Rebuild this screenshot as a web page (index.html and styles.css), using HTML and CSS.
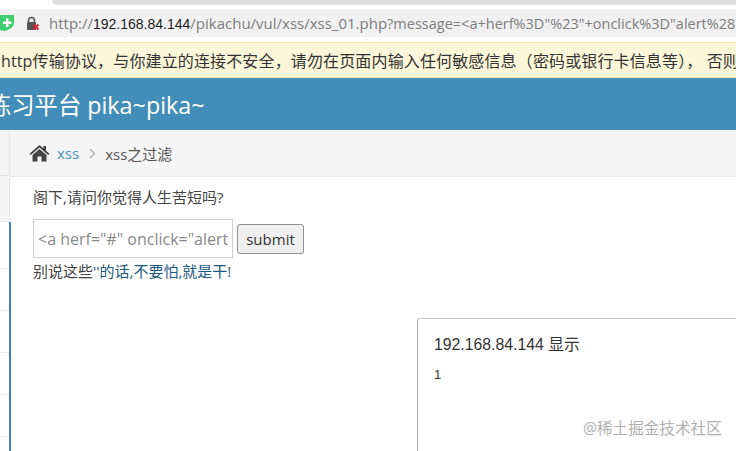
FILE: index.html
```html
<!DOCTYPE html>
<html lang="en">
<head>
  <meta charset="UTF-8" />
  <title>xss之过滤</title>
  <link rel="stylesheet" href="styles.css">
</head>
<body>
  <div class="tab-strip"><div class="tab"></div></div>
  <div class="address-bar">
    <svg class="shield" width="14" height="18" viewBox="0 0 14 18">
      <path d="M-6 1h20v8c0 4-5 7-10 8-6-1-10-4-10-8z" fill="#3fcf6f"/>
      <path d="M3 7.500h3v-3h2.500v3h3V10h-3v3H6v-3H3z" fill="#fff"/>
    </svg>
    <svg class="lock" width="14" height="15" viewBox="0 0 14 15">
      <path d="M2.500 6V4.500a3 3 0 0 1 6 0V6" fill="none" stroke="#555" stroke-width="1.600"/>
      <rect x="1" y="6" width="9" height="8" rx="1" fill="#555"/>
      <path d="M7.500 8.500l5 5m0-5l-5 5" stroke="#d9232e" stroke-width="2"/>
    </svg>
    <div class="url"><span class="url-dim">http://</span><span class="url-host">192.168.84.144</span><span class="url-dim">/pikachu/vul/xss/xss_01.php</span><span class="url-dim url-query">?message=&lt;a+herf%3D"%23"+onclick%3D"alert%281%29"&gt;</span></div>
  </div>
  <div class="warning-bar"><div class="warning-text">如果您继续使用http传输协议，与你建立的连接不安全，请勿在页面内输入任何敏感信息（密码或银行卡信息等）， 否则可能被窃取</div></div>
  <header class="navbar"><div class="brand">练习平台 pika~pika~</div></header>
  <div class="layout">
    <aside class="sidebar">
      <div class="side-top"></div>
      <div class="side-top"></div>
      <div class="side-menu">
        <div class="side-row side-row-first"></div>
        <div class="side-row"></div>
        <div class="side-row"></div>
        <div class="side-row"></div>
        <div class="side-row"></div>
      </div>
    </aside>
    <main class="content">
      <div class="breadcrumbs">
        <svg class="home-icon" width="21" height="18" viewBox="0 0 21 18">
          <path d="M10.500 1L.5 9.700l1.300 1.300 8.700-7.500 8.700 7.500 1.300-1.300-3.500-3V2h-2.600v2.400z" fill="#444"/>
          <path d="M3.500 11l7-6 7 6v6.500h-5v-5h-4v5h-5z" fill="#444"/>
        </svg>
        <a class="crumb-link">xss</a>
        <svg class="crumb-sep" width="7" height="11" viewBox="0 0 7 11"><path d="M1 1l4.500 4.500L1 10" fill="none" stroke="#b5b5b5" stroke-width="1.500"/></svg>
        <span class="crumb-current">xss之过滤</span>
      </div>
      <div class="page">
        <p class="question">阁下,请问你觉得人生苦短吗?</p>
        <div class="form-row">
          <input class="text-input" type="text" value="" placeholder="&lt;a herf=&quot;#&quot; onclick=&quot;alert(1)&quot;&gt;">
          <button class="submit-btn">submit</button>
        </div>
        <p class="reply">别说这些<span class="reply-tail">''的话,不要怕,就是干!</span></p>
      </div>
      <div class="alert-box">
        <div class="alert-title">192.168.84.144 显示</div>
        <div class="alert-msg">1</div>
        <div class="watermark">@稀土掘金技术社区</div>
      </div>
    </main>
  </div>
</body>
</html>
```
FILE: styles.css
```css
html, body {
  margin: 0;
  height: 451px;
  overflow: hidden;
}
body {
  width: 736px;
  background: #fff;
  font-family: "Open Sans", "Noto Sans CJK SC", sans-serif;
  color: #393939;
}
.tab-strip {
  height: 5px;
  background: #fff;
}
.tab {
  margin-left: 52px;
  height: 5px;
  background: #dedede;
  border-bottom-left-radius: 5px;
}
.address-bar {
  margin-top: 4px;
  height: 28px;
  background: #f1f1f1;
  display: flex;
  align-items: center;
  overflow: hidden;
}
.shield {
  flex: none;
}
.lock {
  flex: none;
  margin-left: 12px;
}
.url {
  margin-left: 9px;
  font-size: 15px;
  white-space: nowrap;
}
.url-dim {
  color: #7d7d7d;
}
.url-query {
  font-size: 14.5px;
}
.url-host {
  font-family: "Liberation Sans", sans-serif;
  font-size: 14px;
  color: #1c1c1c;
}
.warning-bar {
  margin-top: 5px;
  height: 36px;
  box-sizing: border-box;
  background: #fdf6d8;
  border-top: 1px solid #f6e2ad;
  border-bottom: 1px solid #f6e2ad;
  overflow: hidden;
  display: flex;
  align-items: center;
}
.warning-text {
  flex: none;
  font-size: 16px;
  letter-spacing: 0.14px;
  white-space: nowrap;
  color: #333;
  margin-left: -112px;
}
.navbar {
  height: 52px;
  background: #438eb9;
  overflow: hidden;
  display: flex;
  align-items: center;
}
.brand {
  margin-left: -12px;
  color: #fff;
  font-size: 23.3px;
  white-space: nowrap;
}
.layout {
  display: flex;
  height: 321px;
}
.sidebar {
  flex: none;
  width: 9px;
  display: flex;
  flex-direction: column;
  position: relative;
  z-index: 1;
}
.side-top {
  height: 46px;
  box-sizing: border-box;
  background: #f5f5f5;
  border-bottom: 1px solid #e5e5e5;
  flex: none;
}
.side-menu {
  flex: 1;
  background: #fff;
  position: relative;
}
/* active item marker, sits over the content's left edge */
.side-menu::after {
  content: "";
  position: absolute;
  left: 9px;
  top: 0;
  bottom: 0;
  width: 2px;
  background: #3f84ae;
}
.side-row {
  height: 41px;
  border-bottom: 1px dotted #d4dce4;
}
.side-row-first {
  height: 46px;
}
.content {
  flex: 1;
  position: relative;
  border-left: 1px solid #e5e5e5;
  min-width: 0;
  overflow: hidden;
}
.breadcrumbs {
  height: 47px;
  box-sizing: border-box;
  background: #f5f5f5;
  border-bottom: 1px solid #e5e5e5;
  display: flex;
  align-items: center;
  padding-left: 19px;
  font-size: 15px;
}
.home-icon {
  flex: none;
}
.crumb-link {
  margin-left: 7px;
  color: #4c8fbd;
}
.crumb-sep {
  margin: 0 9px 0 10px;
  flex: none;
}
.crumb-current {
  color: #555;
}
.page {
  padding: 10px 23px 0;
  font-size: 15px;
}
.question {
  margin: 0;
  line-height: 20px;
  color: #444;
}
.form-row {
  margin-top: 12px;
  display: flex;
  align-items: center;
  gap: 4px;
}
.text-input {
  width: 200px;
  height: 39px;
  box-sizing: border-box;
  padding: 0 4px;
  border: 1px solid #d0d0d0;
  font: 16px "Open Sans", sans-serif;
  outline: none;
}
.text-input::placeholder {
  color: #8a8a8a;
  opacity: 1;
}
.submit-btn {
  height: 30px;
  width: 67px;
  padding: 0;
  background: #efefef;
  border: 1px solid #8f8f8f;
  border-radius: 3px;
  font: 15px "Open Sans", sans-serif;
  color: #333;
}
.reply {
  margin: 3px 0 0;
  line-height: 20px;
  color: #444;
}
.reply-tail {
  color: #1d5a80;
}
.alert-box {
  position: absolute;
  left: 407px;
  top: 188px;
  width: 340px;
  height: 150px;
  background: #fff;
  border: 1px solid #c4c4c4;
  border-left-color: #a8a8a8;
  border-radius: 3px;
}
.alert-title {
  margin: 13px 0 0 16px;
  font-family: "Liberation Sans", "Noto Sans CJK SC", sans-serif;
  font-size: 15.8px;
  color: #333;
}
.alert-msg {
  margin: 12px 0 0 16px;
  font-family: "Liberation Sans", sans-serif;
  font-size: 13px;
  color: #333;
}
.watermark {
  position: absolute;
  left: 165px;
  top: 97px;
  font-size: 15.6px;
  color: #b0b0b0;
  white-space: nowrap;
}
```
